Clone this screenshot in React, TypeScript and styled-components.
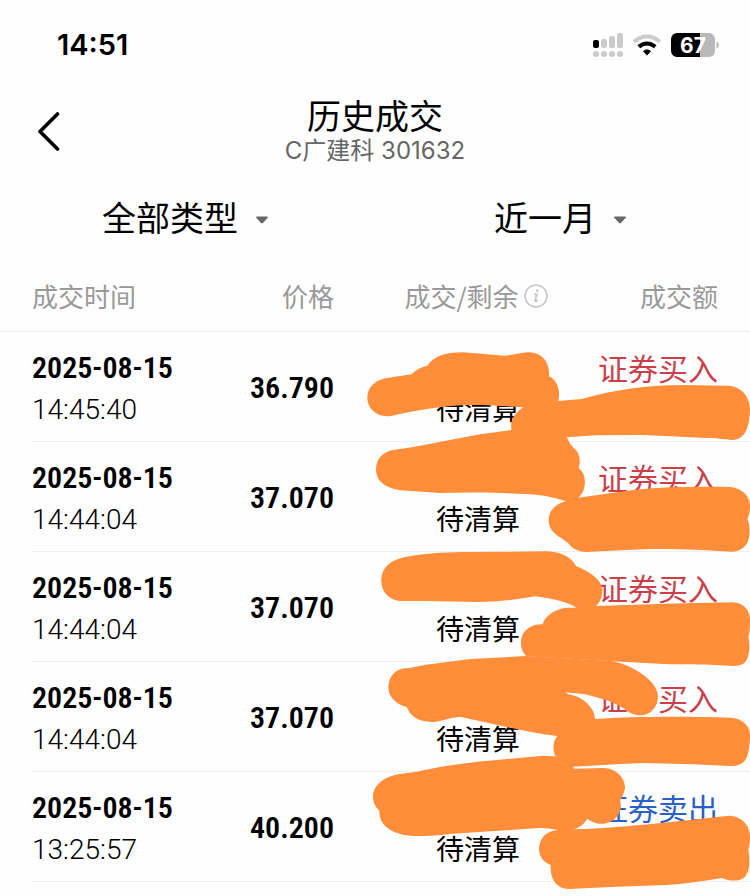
import React from "react";
import styled, { createGlobalStyle } from "styled-components";

const GlobalStyle = createGlobalStyle`
  *, *::before, *::after { box-sizing: border-box; }
  body {
    margin: 0;
    background: #fefefe;
    color: #000;
    font-family: "Roboto", "Noto Sans CJK SC", sans-serif;
  }
`;

const Screen = styled.main`
  min-height: 100vh;
  overflow: hidden;
`;

const StatusBar = styled.div`
  display: flex;
  align-items: center;
  justify-content: space-between;
  height: 90px;
  padding: 0 31px 0 57px;
`;

const Clock = styled.time`
  font: 600 29px/40px "Inter", sans-serif;
`;

const StatusIcons = styled.div`
  display: flex;
  align-items: center;
  gap: 10px;
`;

const Header = styled.header`
  display: grid;
  grid-template-columns: 64px 1fr 64px;
  align-items: center;
  height: 82px;
  padding: 0 32px;
`;

const BackButton = styled.button`
  display: flex;
  padding: 0;
  border: 0;
  background: none;
  cursor: pointer;
`;

const Titles = styled.div`
  text-align: center;
`;

const Title = styled.h1`
  margin: 0;
  font: 400 34px/40px "Noto Sans CJK SC", sans-serif;
`;

const Subtitle = styled.p`
  margin: 0;
  color: #666;
  font: 400 24px/32px "Inter", "Noto Sans CJK SC", sans-serif;
`;

const Filters = styled.div`
  display: grid;
  grid-template-columns: 1fr 1fr;
  height: 92px;
`;

const Filter = styled.label`
  display: flex;
  align-items: center;
  justify-content: center;
  gap: 18px;
  padding: 0 5px 2px 0;
`;

const FilterSelect = styled.select`
  appearance: none;
  padding: 0;
  border: 0;
  background: none;
  color: #000;
  font: 400 34px/48px "Noto Sans CJK SC", sans-serif;
`;

const TradeArea = styled.section`
  position: relative;
`;

const Table = styled.table`
  display: block;
  thead, tbody { display: block; }
`;

const Row = styled.tr<{ $head?: boolean }>`
  display: grid;
  grid-template-columns:
    minmax(0, 150fr) minmax(0, 152fr) minmax(0, 264fr) minmax(120px, 120fr);
  height: ${(p) => (p.$head ? 68 : 110)}px;
  margin-left: ${(p) => (p.$head ? 0 : 32)}px;
  padding: ${(p) => (p.$head ? "0 32px 3px" : "15px 32px 0 0")};
  align-items: ${(p) => (p.$head ? "center" : "start")};
  border-bottom: 1px solid #efefef;
`;

type Align = "left" | "right" | "center";

const HeadCell = styled.th<{ $align: Align }>`
  padding: 0 0 0 ${(p) => (p.$align === "center" ? 20 : 0)}px;
  color: #999;
  font: 400 26px/36px "Noto Sans CJK SC", sans-serif;
  text-align: ${(p) => p.$align};
  white-space: nowrap;
`;

const HeadWithInfo = styled.span`
  display: inline-flex;
  align-items: center;
  gap: 5px;
`;

const Cell = styled.td<{ $align: Align }>`
  display: grid;
  grid-template-rows: 41px 41px;
  padding: 0 0 0 ${(p) => (p.$align === "center" ? 24 : 0)}px;
  text-align: ${(p) => p.$align};
  white-space: nowrap;
`;

const DateText = styled.span`
  font: 600 30px/41px "Roboto Condensed", "Roboto", sans-serif;
`;

const TimeText = styled.span`
  font: 300 28px/44px "Roboto", sans-serif;
`;

const Price = styled.span`
  grid-row: 1 / 3;
  font: 600 30px/82px "Roboto Condensed", "Roboto", sans-serif;
`;

const State = styled.span`
  grid-row: 2;
  font: 400 28px/41px "Noto Sans CJK SC", sans-serif;
`;

const Side = styled.span<{ $sell: boolean }>`
  color: ${(p) => (p.$sell ? "#2a62c4" : "#c9404a")};
  font: 400 30px/41px "Noto Sans CJK SC", sans-serif;
`;

const Redaction = styled.svg`
  position: absolute;
  top: 0;
  right: 0;
  width: 400px;
  height: 632px;
  pointer-events: none;
`;

const trades = [
  { date: "2025-08-15", time: "14:45:40", price: "36.790", side: "证券买入" },
  { date: "2025-08-15", time: "14:44:04", price: "37.070", side: "证券买入" },
  { date: "2025-08-15", time: "14:44:04", price: "37.070", side: "证券买入" },
  { date: "2025-08-15", time: "14:44:04", price: "37.070", side: "证券买入" },
  { date: "2025-08-15", time: "13:25:57", price: "40.200", side: "证券卖出" },
];

const strokes = [
  { y: 213, d: "M52 190C52 155 75 138 105 130L185 118C200 102 215 96 232 92C255 60 290 52 340 52L465 62L530 52C575 50 600 80 597 124C622 136 632 165 625 198L695 192C800 162 900 150 1000 150L1135 152C1175 155 1200 185 1200 225C1197 290 1180 312 1148 315C1120 312 1100 309 1070 309L880 300L740 301L650 307L520 295L485 288C480 265 485 240 520 217L400 210L350 210C280 213 200 225 135 240C90 255 52 225 52 190Z" },
  { y: 483, d: "M78 133C78 100 100 80 130 75L190 66L390 28L483 15L650 35C655 50 665 65 678 75C690 90 692 110 686 130C710 145 712 195 685 218L850 195C950 185 1050 185 1140 186C1180 190 1200 215 1200 245C1200 262 1195 275 1192 283C1200 295 1200 330 1195 345C1190 365 1170 380 1145 380C1060 375 960 370 880 373L720 380C690 385 665 370 655 355L635 340C610 325 596 310 596 285C596 255 620 235 648 229C610 215 560 206 500 206C400 200 330 204 270 204L150 196C100 188 78 165 78 133Z" },
  { y: 828, d: "M94 122C94 80 125 58 170 50C240 38 300 36 360 36L590 34C640 36 665 55 678 78C720 95 755 120 757 148C757 175 748 190 738 198L1000 190L1150 187C1185 190 1200 215 1200 240C1200 270 1197 285 1195 292C1200 310 1200 350 1185 367C1175 378 1155 379 1140 377C1050 372 1000 375 940 372L790 364L530 349C515 335 513 320 513 305C515 270 545 252 578 253C585 225 615 210 645 203L680 203C660 190 610 175 555 169C490 180 440 186 380 186L230 183L150 183C115 178 94 155 94 122Z" },
  { y: 1143, d: "M115 125C117 90 140 72 165 70C190 70 205 62 240 58L360 42L530 33L785 48C850 60 925 110 924 155C920 200 890 212 865 211C840 208 830 195 815 187C790 170 740 155 700 147L645 142L655 148C700 155 735 190 735 222C850 214 1000 214 1145 218C1180 222 1200 245 1200 270C1200 295 1197 310 1193 330C1185 355 1165 365 1140 363L1030 358L880 354L800 358L668 365L640 345L615 332C608 310 608 290 622 273C540 265 450 240 330 215C300 218 285 225 260 230C210 235 180 215 171 187C135 175 115 155 115 125Z" },
  { y: 1458, d: "M69 140C70 100 110 78 150 72L200 65C290 45 380 35 440 30L580 17L640 20L668 45L672 56L760 54C800 55 826 85 825 115C823 130 815 142 810 152C815 170 812 180 805 195C790 215 770 224 745 221C730 218 718 210 712 206C700 225 685 235 668 238C850 232 1000 210 1140 197C1180 200 1200 230 1200 260C1200 280 1197 292 1195 300C1200 330 1200 365 1185 380C1170 395 1140 395 1115 384C1050 395 1000 402 950 405L800 410L655 417C620 415 600 390 602 345C575 335 567 315 567 295C570 260 590 243 625 240C600 235 580 233 570 234C480 240 380 247 300 252C260 257 220 259 190 258C160 257 135 247 125 242C95 225 88 205 88 182C75 170 69 155 69 140Z" },
];

function SignalIcon() {
  return (
    <svg width="30" height="24" viewBox="0 0 30 24" fill="#cbcbcb" aria-hidden="true">
      <rect x="0" y="7" width="6" height="8" rx="2" fill="#000" />
      <rect x="8" y="6" width="6" height="9" rx="2" />
      <rect x="16" y="3" width="6" height="12" rx="2" />
      <rect x="24" y="0" width="6" height="15" rx="2" />
      <circle cx="3" cy="21" r="3" />
      <circle cx="11" cy="21" r="3" />
      <circle cx="19" cy="21" r="3" />
      <circle cx="27" cy="21" r="3" />
    </svg>
  );
}

function WifiIcon() {
  return (
    <svg width="28" height="22" viewBox="1 0 28 22" fill="none" aria-hidden="true">
      <path d="M2 7.8C9.5 .6 20.5 .6 28 7.8" stroke="#cbcbcb" strokeWidth="4" />
      <path d="M6.800 12.700C11.600 8.300 18.400 8.300 23.200 12.700" stroke="#000" strokeWidth="4" />
      <path d="M11 17.200C13.300 15 16.700 15 19 17.200L15 21.400Z" fill="#000" />
    </svg>
  );
}

function BatteryIcon() {
  return (
    <svg width="48" height="24" viewBox="0 0 48 24" role="img" aria-label="67%">
      <path d="M29 0H37C41.500 0 44 2.500 44 7V17C44 21.500 41.500 24 37 24H29Z" fill="#b9b9b9" />
      <path d="M7 0H29V24H7C2.500 24 0 21.500 0 17V7C0 2.500 2.500 0 7 0Z" fill="#000" />
      <path d="M45.500 8.500C48.600 9.500 48.600 14.500 45.500 15.500Z" fill="#b9b9b9" />
      <text x="22" y="20" textAnchor="middle" fill="#fff" fontFamily="Inter, sans-serif" fontSize="21" fontWeight="700">67</text>
    </svg>
  );
}

function Caret() {
  return (
    <svg width="12" height="14" viewBox="0 -6 12 14" aria-hidden="true">
      <path d="M1 .5H11C12 .5 12.200 1.300 11.500 2L7.200 6.700C6.500 7.500 5.500 7.500 4.800 6.700L.5 2C-.2 1.300 0 .5 1 .5Z" fill="#666" />
    </svg>
  );
}

function InfoIcon() {
  return (
    <svg width="24" height="24" viewBox="0 0 24 24" fill="none" stroke="#c8c8c8" aria-hidden="true">
      <circle cx="12" cy="12" r="11" strokeWidth="1.600" />
      <path d="M10 10.200H12.800L11 16.500C10.800 17.600 12.200 17.500 13.800 16" strokeWidth="1.800" />
      <circle cx="13.200" cy="6.600" r="1.300" fill="#c8c8c8" stroke="none" />
    </svg>
  );
}

export default function App() {
  return (
    <Screen>
      <GlobalStyle />
      <StatusBar>
        <Clock>14:51</Clock>
        <StatusIcons>
          <SignalIcon />
          <WifiIcon />
          <BatteryIcon />
        </StatusIcons>
      </StatusBar>
      <Header>
        <BackButton type="button" aria-label="返回">
          <svg width="32" height="40" viewBox="0 0 32 40" fill="none" aria-hidden="true">
            <path d="M25.500 3L8 20.500L25.500 38" stroke="#000" strokeWidth="3.600" strokeLinecap="round" strokeLinejoin="round" />
          </svg>
        </BackButton>
        <Titles>
          <Title>历史成交</Title>
          <Subtitle>C广建科 301632</Subtitle>
        </Titles>
      </Header>
      <Filters>
        <Filter>
          <FilterSelect aria-label="类型">
            <option>全部类型</option>
          </FilterSelect>
          <Caret />
        </Filter>
        <Filter>
          <FilterSelect aria-label="时间范围">
            <option>近一月</option>
          </FilterSelect>
          <Caret />
        </Filter>
      </Filters>
      <TradeArea>
        <Table>
          <thead>
            <Row $head>
              <HeadCell $align="left">成交时间</HeadCell>
              <HeadCell $align="right">价格</HeadCell>
              <HeadCell $align="center">
                <HeadWithInfo>
                  成交/剩余
                  <InfoIcon />
                </HeadWithInfo>
              </HeadCell>
              <HeadCell $align="right">成交额</HeadCell>
            </Row>
          </thead>
          <tbody>
            {trades.map((t, i) => (
              <Row key={i}>
                <Cell $align="left">
                  <DateText>{t.date}</DateText>
                  <TimeText>{t.time}</TimeText>
                </Cell>
                <Cell $align="right">
                  <Price>{t.price}</Price>
                </Cell>
                <Cell $align="center">
                  <State>待清算</State>
                </Cell>
                <Cell $align="right">
                  <Side $sell={t.side === "证券卖出"}>{t.side}</Side>
                </Cell>
              </Row>
            ))}
          </tbody>
        </Table>
        <Redaction viewBox="0 0 1200 1896" fill="#ff8d3a" aria-hidden="true">
          {strokes.map((s) => (
            <path key={s.y} d={s.d} transform={`translate(0 ${s.y})`} />
          ))}
        </Redaction>
      </TradeArea>
    </Screen>
  );
}
